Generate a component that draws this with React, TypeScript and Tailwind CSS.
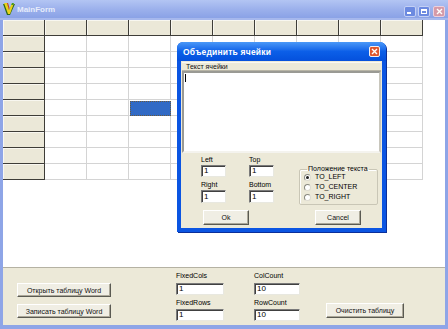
import React from "react";

const btn =
  "flex items-center justify-center bg-[#f0eee4] border border-t-[#ffffff] border-l-[#ffffff] border-r-[#5a5a52] border-b-[#5a5a52] shadow-[inset_-1px_-1px_0_#aca899] text-[7px] leading-[7px] text-[#111]";
const input =
  "bg-white border border-t-[#7a7a7a] border-l-[#7a7a7a] border-r-[#e8e8e0] border-b-[#e8e8e0] shadow-[inset_1px_1px_0_#404040] text-[8px] leading-[10px] pl-[2px] flex items-center";

function Logo() {
  return (
    <svg width="12" height="13" viewBox="0 0 12 13">
      <polygon points="0,1 4,1 6,8 9,1 12,1 7,12 4,12" fill="#2e6b1a" />
      <polygon points="1,0 4,0 6,7 9,0 11,0 7,11 5,11" fill="#e8d21c" />
      <polygon points="4,0 5,0 6.5,5 6,7" fill="#c83a1a" />
      <polygon points="9,0 11,0 10,2 8.3,2" fill="#3a9a2a" />
    </svg>
  );
}

function Grid() {
  const idx = Array.from({ length: 10 }, (_, i) => i);
  return (
    <div className="flex flex-col">
      {idx.map((r) => (
        <div key={r} className="flex">
          {idx.map((c) => {
            const fixed = r === 0 || c === 0;
            const sel = r === 5 && c === 3;
            if (fixed)
              return (
                <div
                  key={c}
                  className="w-[42px] h-[16px] bg-[#ebe8d8] border-r border-b border-[#3e3d38] shadow-[inset_1px_1px_0_#f8f7f0]"
                />
              );
            if (sel)
              return (
                <div key={c} className="w-[42px] h-[16px] border-b border-[#d4d4d4] pl-[1px] pt-[1px]">
                  <div className="w-[41px] h-[15px] bg-[#316ac5] border border-dotted border-[#6b5a3a]" />
                </div>
              );
            return <div key={c} className="w-[42px] h-[16px] bg-white border-r border-b border-[#d4d4d4]" />;
          })}
        </div>
      ))}
    </div>
  );
}

function Field({ label, value, w }: { label: [string, string]; value: [string, string]; w: string }) {
  return (
    <div className={`flex flex-col pt-[2px] ${w}`}>
      <div className="h-[13px] text-[7px] leading-[12px]">{label[0]}</div>
      <div className={`${input} h-[12px]`}>{value[0]}</div>
      <div className="h-[14px] pt-[2px] text-[7px] leading-[12px]">{label[1]}</div>
      <div className={`${input} h-[12px]`}>{value[1]}</div>
    </div>
  );
}

function DlgField({ label }: { label: [string, string] }) {
  return (
    <div className="flex flex-col w-[25px]">
      <div className="mt-[2px] h-[10px] text-[7px] leading-[10px]">{label[0]}</div>
      <div className={`${input} h-[12px]`}>1</div>
      <div className="h-[13px] pt-[3px] text-[7px] leading-[10px]">{label[1]}</div>
      <div className={`${input} h-[13px]`}>1</div>
    </div>
  );
}

function Radio({ label, checked }: { label: string; checked?: boolean }) {
  return (
    <div className="h-[10px] flex items-center">
      <div className="w-[7px] h-[7px] rounded-full bg-white border border-t-[#8a8a80] border-l-[#8a8a80] border-r-[#dcdad0] border-b-[#dcdad0] flex items-center justify-center">
        {checked && <div className="w-[3px] h-[3px] rounded-full bg-[#202020]" />}
      </div>
      <span className="ml-[4px] text-[7px] leading-[10px]">{label}</span>
    </div>
  );
}

export default function App() {
  return (
    <div className="w-[448px] h-[329px] bg-[#8ea5e7] flex flex-col overflow-hidden relative font-['Liberation_Sans',Arial,sans-serif] text-black">
      {/* Title bar */}
      <div className="h-[18px] shrink-0 flex items-start bg-linear-to-b from-[#b3c5f3] via-[#9cb1ec] to-[#8aa2e6]">
        <div className="mt-[3px] ml-[3px]">
          <Logo />
        </div>
        <span className="ml-[2px] mt-[5px] text-[8px] leading-[9px] font-bold text-[#e6ecfb]">MainForm</span>
        <div className="ml-auto mt-[6px] mr-[3px] flex">
          <div className="w-[12px] h-[11px] rounded-[2px] bg-[#6c8ae0] border border-[#c4d0f4] flex items-end pl-[2px] pb-[2px]">
            <div className="w-[4px] h-[2px] bg-white" />
          </div>
          <div className="ml-[2px] w-[12px] h-[11px] rounded-[2px] bg-[#6c8ae0] border border-[#c4d0f4] flex items-center justify-center">
            <div className="w-[6px] h-[5px] border border-white border-t-2" />
          </div>
          <div className="ml-[3px] w-[12px] h-[11px] rounded-[2px] bg-[#d59aa8] border border-[#ecd0dc] flex items-center justify-center">
            <svg width="7" height="7" viewBox="0 0 7 7">
              <path d="M1 1 L6 6 M6 1 L1 6" stroke="#ffffff" strokeWidth="1.4" />
            </svg>
          </div>
        </div>
      </div>
      <div className="h-[2px] shrink-0 bg-[#a6b8ed]" />

      <div className="mx-[3px] mb-[4px] flex-1 flex flex-col">
        <div className="h-[247px] bg-white">
          <Grid />
        </div>
        <div className="flex-1 bg-[#ece9d8] border-t border-[#b5b2a3] flex pl-[14px]">
          <div className="flex flex-col pt-[15px] gap-[7px]">
            <div className={`${btn} w-[94px] h-[14px]`}>Открыть таблицу Word</div>
            <div className={`${btn} w-[94px] h-[14px]`}>Записать таблицу Word</div>
          </div>
          <div className="ml-[65px]">
            <Field label={["FixedCols", "FixedRows"]} value={["1", "1"]} w="w-[48px]" />
          </div>
          <div className="ml-[30px]">
            <Field label={["ColCount", "RowCount"]} value={["10", "10"]} w="w-[46px]" />
          </div>
          <div className="ml-[26px] pt-[35px]">
            <div className={`${btn} w-[78px] h-[15px]`}>Очистить таблицу</div>
          </div>
        </div>
      </div>

      {/* Dialog */}
      <div className="absolute left-[177px] top-[42px] w-[209px] h-[190px] rounded-t-[6px] bg-[#0b55e2] flex flex-col shadow-[1px_1px_0_#0a2f9a]">
        <div className="h-[19px] shrink-0 rounded-t-[6px] bg-linear-to-b from-[#4a98f7] via-[#0c5fe8] to-[#0550dc] flex items-center pl-[6px] pr-[6px]">
          <span className="text-white font-bold text-[8.5px] leading-[10px] tracking-[0.2px]">Объединить ячейки</span>
          <div className="ml-auto w-[11px] h-[11px] rounded-[2px] bg-[#e0582e] border border-[#f4f0f0] flex items-center justify-center">
            <svg width="7" height="7" viewBox="0 0 7 7">
              <path d="M1 1 L6 6 M6 1 L1 6" stroke="#ffffff" strokeWidth="1.4" />
            </svg>
          </div>
        </div>
        <div className="flex-1 mx-[4px] mb-[4px] bg-[#ece9d8] flex flex-col">
          <div className="mx-[1px] mt-[1px] h-[9px] border-t border-[#faf9f4] border-b border-b-[#b8b5a6] text-[7px] leading-[7px] pl-[4px] text-[#111]">
            Текст ячейки
          </div>
          <div className="mx-[1px] h-[82px] bg-white border-2 border-t-[#9a9a94] border-l-[#9a9a94] border-r-[#c8c6bc] border-b-[#f4f3ee] pl-[1px] pt-[1px]">
            <div className="w-[1px] h-[8px] bg-black" />
          </div>
          <div className="flex-1 flex flex-col">
            <div className="h-[52px] flex pl-[20px]">
              <DlgField label={["Left", "Right"]} />
              <div className="ml-[23px]">
                <DlgField label={["Top", "Bottom"]} />
              </div>
              <fieldset className="ml-[25px] mt-[12px] w-[79px] h-[40px] border border-[#c9c6b6] rounded-[2px] shadow-[inset_1px_1px_0_#ffffff] pl-[4px]">
                <legend className="ml-[3px] px-[1px] text-[7px] leading-[8px]">Положение текста</legend>
                <div className="-mt-[1px] flex flex-col">
                  <Radio label="TO_LEFT" checked />
                  <Radio label="TO_CENTER" />
                  <Radio label="TO_RIGHT" />
                </div>
              </fieldset>
            </div>
            <div className="mt-[5px] flex">
              <div className={`${btn} ml-[22px] w-[46px] h-[15px]`}>Ok</div>
              <div className={`${btn} ml-[66px] w-[46px] h-[15px]`}>Cancel</div>
            </div>
          </div>
        </div>
      </div>
    </div>
  );
}
